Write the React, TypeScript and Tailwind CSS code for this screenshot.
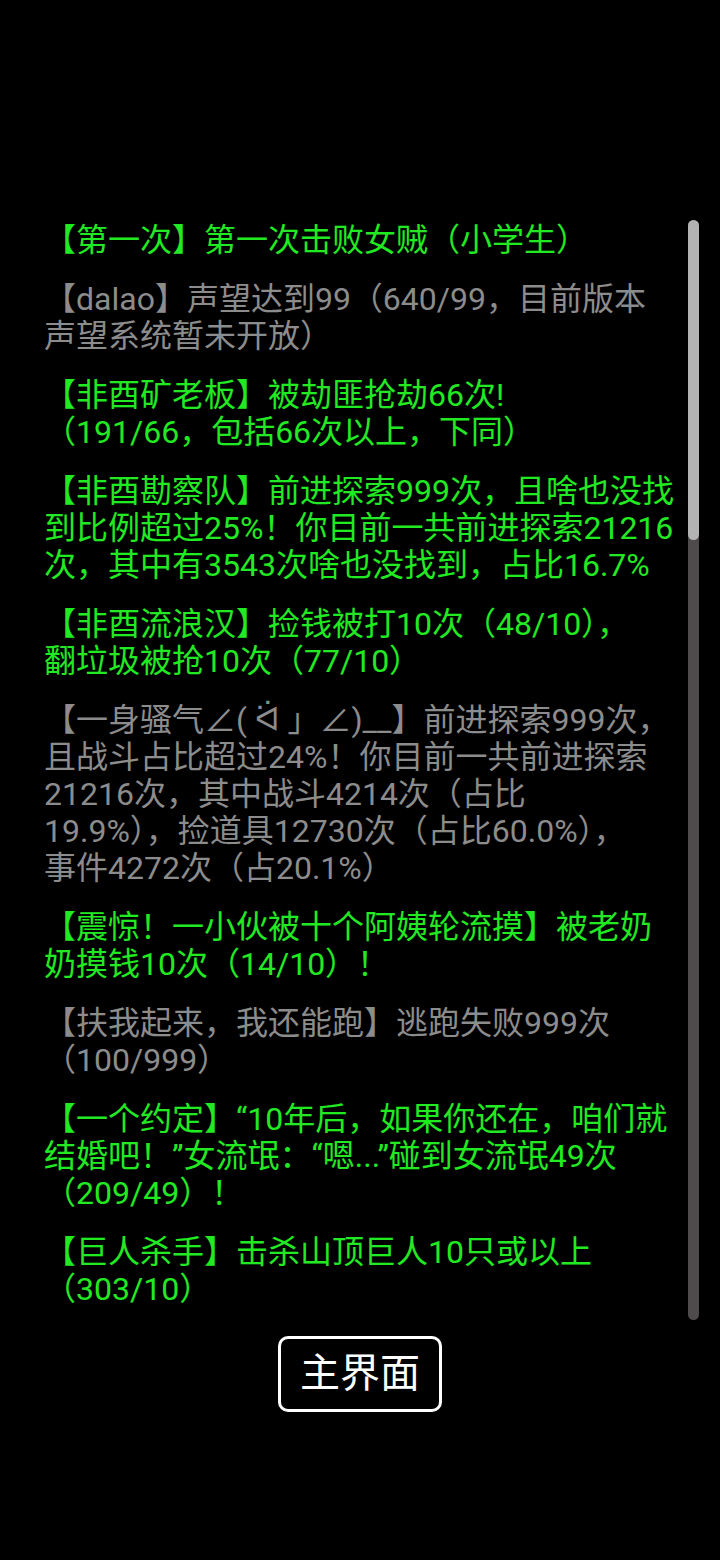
import React from "react";

type Item = { color: "g" | "w"; lines: string[] };

const items: Item[] = [
  { color: "g", lines: ["【第一次】第一次击败女贼（小学生）"] },
  { color: "w", lines: ["【dalao】声望达到99（640/99，目前版本", "声望系统暂未开放）"] },
  { color: "g", lines: ["【非酉矿老板】被劫匪抢劫66次!", "（191/66，包括66次以上，下同）"] },
  {
    color: "g",
    lines: [
      "【非酉勘察队】前进探索999次，且啥也没找",
      "到比例超过25%！你目前一共前进探索21216",
      "次，其中有3543次啥也没找到，占比16.7%",
    ],
  },
  { color: "g", lines: ["【非酉流浪汉】捡钱被打10次（48/10），", "翻垃圾被抢10次（77/10）"] },
  {
    color: "w",
    lines: [
      "【一身骚气∠( ᐛ 」∠)__】前进探索999次，",
      "且战斗占比超过24%！你目前一共前进探索",
      "21216次，其中战斗4214次（占比",
      "19.9%），捡道具12730次（占比60.0%），",
      "事件4272次（占20.1%）",
    ],
  },
  { color: "g", lines: ["【震惊！一小伙被十个阿姨轮流摸】被老奶", "奶摸钱10次（14/10）！"] },
  { color: "w", lines: ["【扶我起来，我还能跑】逃跑失败999次", "（100/999）"] },
  {
    color: "g",
    lines: [
      "【一个约定】“10年后，如果你还在，咱们就",
      "结婚吧！”女流氓：“嗯...”碰到女流氓49次",
      "（209/49）！",
    ],
  },
  { color: "g", lines: ["【巨人杀手】击杀山顶巨人10只或以上", "（303/10）"] },
];

export default function App() {
  return (
    <div
      className="w-[720px] h-[1560px] bg-black flex flex-col"
      style={{ fontFamily: 'Roboto, "Noto Sans CJK SC", "DejaVu Sans", sans-serif' }}
    >
      <div className="h-[220px]" />
      <div className="flex h-[1100px]">
        <div className="w-[680px] pl-[44px] pt-[2px] overflow-hidden flex flex-col gap-[22px]">
          {items.map((it, i) => (
            <div
              key={i}
              className={
                (it.color === "g" ? "text-[#22ea22]" : "text-[#8c8c8c]") +
                " text-[32px] leading-[37px] whitespace-nowrap"
              }
            >
              {it.lines.map((l, j) => (
                <div key={j}>{l}</div>
              ))}
            </div>
          ))}
        </div>
        <div className="ml-[8px] w-[11px] h-[1100px] rounded-full bg-[#4f4a4b] flex flex-col">
          <div className="h-[320px] w-full rounded-full bg-[#b3b3b3]" />
        </div>
      </div>
      <div className="flex justify-center mt-[16px]">
        <div className="w-[164px] h-[76px] border-[3px] border-white rounded-[10px] flex items-center justify-center text-white text-[40px] leading-none">
          主界面
        </div>
      </div>
    </div>
  );
}
